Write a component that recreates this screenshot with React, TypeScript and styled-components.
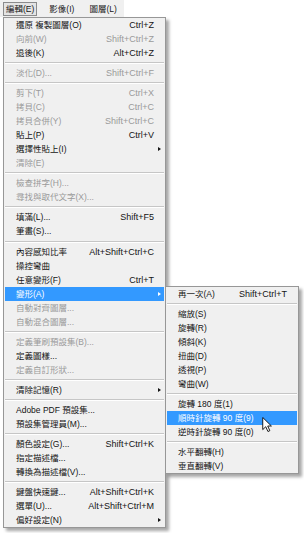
import styled, { createGlobalStyle } from "styled-components";

type Entry =
  | { label: string; keys?: string; off?: boolean; arrow?: boolean; active?: boolean }
  | { sep: true; tall?: boolean };

const editMenu: Entry[] = [
  { label: "還原 複製圖層(O)", keys: "Ctrl+Z" },
  { label: "向前(W)", keys: "Shift+Ctrl+Z", off: true },
  { label: "退後(K)", keys: "Alt+Ctrl+Z" },
  { sep: true },
  { label: "淡化(D)...", keys: "Shift+Ctrl+F", off: true },
  { sep: true },
  { label: "剪下(T)", keys: "Ctrl+X", off: true },
  { label: "拷貝(C)", keys: "Ctrl+C", off: true },
  { label: "拷貝合併(Y)", keys: "Shift+Ctrl+C", off: true },
  { label: "貼上(P)", keys: "Ctrl+V" },
  { label: "選擇性貼上(I)", arrow: true },
  { label: "清除(E)", off: true },
  { sep: true },
  { label: "檢查拼字(H)...", off: true },
  { label: "尋找與取代文字(X)...", off: true },
  { sep: true },
  { label: "填滿(L)...", keys: "Shift+F5" },
  { label: "筆畫(S)..." },
  { sep: true, tall: true },
  { label: "內容感知比率", keys: "Alt+Shift+Ctrl+C" },
  { label: "操控彎曲" },
  { label: "任意變形(F)", keys: "Ctrl+T" },
  { label: "變形(A)", arrow: true, active: true },
  { label: "自動對齊圖層...", off: true },
  { label: "自動混合圖層...", off: true },
  { sep: true },
  { label: "定義筆刷預設集(B)...", off: true },
  { label: "定義圖樣..." },
  { label: "定義自訂形狀...", off: true },
  { sep: true },
  { label: "清除記憶(R)", arrow: true },
  { sep: true },
  { label: "Adobe PDF 預設集..." },
  { label: "預設集管理員(M)..." },
  { sep: true },
  { label: "顏色設定(G)...", keys: "Shift+Ctrl+K" },
  { label: "指定描述檔..." },
  { label: "轉換為描述檔(V)..." },
  { sep: true },
  { label: "鍵盤快速鍵...", keys: "Alt+Shift+Ctrl+K" },
  { label: "選單(U)...", keys: "Alt+Shift+Ctrl+M" },
  { label: "偏好設定(N)", arrow: true },
];

const transformMenu: Entry[] = [
  { label: "再一次(A)", keys: "Shift+Ctrl+T" },
  { sep: true },
  { label: "縮放(S)" },
  { label: "旋轉(R)" },
  { label: "傾斜(K)" },
  { label: "扭曲(D)" },
  { label: "透視(P)" },
  { label: "彎曲(W)" },
  { sep: true },
  { label: "旋轉 180 度(1)" },
  { label: "順時針旋轉 90 度(9)", active: true },
  { label: "逆時針旋轉 90 度(0)" },
  { sep: true },
  { label: "水平翻轉(H)" },
  { label: "垂直翻轉(V)" },
];

const Pointer = () => (
  <CursorBox width="10" height="15" viewBox="0 0 12 19">
    <path
      d="M0.6 0.6 V16 L4.4 12.3 L7.2 18.4 L9.6 17.3 L6.9 11.4 H11.6 Z"
      fill="#fff"
      stroke="#000"
      strokeWidth="1.1"
      strokeLinejoin="round"
    />
  </CursorBox>
);

const MenuList = ({ items, sub }: { items: Entry[]; sub?: boolean }) => (
  <>
    {items.map((entry, i) => {
      if ("sep" in entry) return <Separator key={i} $tall={entry.tall} />;
      return (
        <Item key={i} $active={entry.active} $off={entry.off}>
          <Label>{entry.label}</Label>
          <Keys>{entry.keys}</Keys>
          {entry.arrow ? <Arrow /> : <span />}
          {entry.active && !sub && (
            <Submenu>
              <MenuList items={transformMenu} sub />
            </Submenu>
          )}
          {entry.active && sub && <Pointer />}
        </Item>
      );
    })}
  </>
);

export default function App() {
  return (
    <>
      <GlobalStyle />
      <Page>
        <MenuBar>
          <BarItem $open>編輯(E)</BarItem>
          <BarItem>影像(I)</BarItem>
          <BarItem>圖層(L)</BarItem>
        </MenuBar>
        <MainMenu>
          <MenuList items={editMenu} />
        </MainMenu>
      </Page>
    </>
  );
}

const GlobalStyle = createGlobalStyle`
  html, body {
    margin: 0;
    background: #ffffff;
  }
  body {
    font-family: "Liberation Sans", "Noto Sans CJK TC", sans-serif;
    -webkit-font-smoothing: antialiased;
  }
`;

const Page = styled.div`
  width: 304px;
  height: 533px;
  overflow: hidden;
  display: flex;
  flex-direction: column;
  align-items: flex-start;
`;

const MenuBar = styled.div`
  display: flex;
  align-items: flex-start;
  gap: 9px;
  height: 17px;
  box-sizing: border-box;
  padding: 2px 4px 0 3px;
  background: #f0f0f0;
`;

const BarItem = styled.div<{ $open?: boolean }>`
  height: 14px;
  box-sizing: border-box;
  padding: 0 2px;
  font-size: 8.5px;
  line-height: 12px;
  color: #1a1a1a;
  white-space: nowrap;
  border: 1px solid ${(p) => (p.$open ? "#8a8b8c" : "transparent")};
  background: ${(p) => (p.$open ? "#e4e4e4" : "transparent")};
`;

const MainMenu = styled.div`
  position: relative;
  width: 163px;
  box-sizing: border-box;
  margin-left: 3px;
  border: 1px solid #979797;
  background: #f0f0f0;
  box-shadow: 3px 3px 3px rgba(0, 0, 0, 0.35);
`;

const Submenu = styled.div`
  position: absolute;
  left: calc(100% + 1px);
  top: -1px;
  z-index: 2;
  width: 134px;
  box-sizing: border-box;
  border: 1px solid #979797;
  background: #f0f0f0;
  box-shadow: 3px 3px 3px rgba(0, 0, 0, 0.35);
`;

const Item = styled.div<{ $active?: boolean; $off?: boolean }>`
  position: relative;
  display: grid;
  grid-template-columns: 1fr auto 10px;
  align-items: center;
  height: 14px;
  margin: 0 1px;
  padding-left: 11px;
  white-space: nowrap;
  background: ${(p) => (p.$active ? "#3399ff" : "transparent")};
  color: ${(p) => (p.$active ? "#ffffff" : p.$off ? "#9a9a9a" : "#141414")};
`;

const Label = styled.span`
  font-size: 8.5px;
  line-height: 14px;
`;

const Keys = styled.span`
  font-size: 9px;
  line-height: 14px;
  padding-left: 8px;
`;

const Arrow = styled.span`
  justify-self: center;
  width: 0;
  height: 0;
  border-left: 3px solid currentColor;
  border-top: 2.5px solid transparent;
  border-bottom: 2.5px solid transparent;
`;

const Separator = styled.div<{ $tall?: boolean }>`
  height: ${(p) => (p.$tall ? 7 : 6)}px;
  box-sizing: border-box;
  padding-top: ${(p) => (p.$tall ? 3 : 2)}px;
  margin: 0 1px;
  &::after {
    content: "";
    display: block;
    border-top: 1px solid #c6c6c6;
    border-bottom: 1px solid #ffffff;
  }
`;

const CursorBox = styled.svg`
  position: absolute;
  left: 95px;
  top: 6px;
  z-index: 3;
`;
